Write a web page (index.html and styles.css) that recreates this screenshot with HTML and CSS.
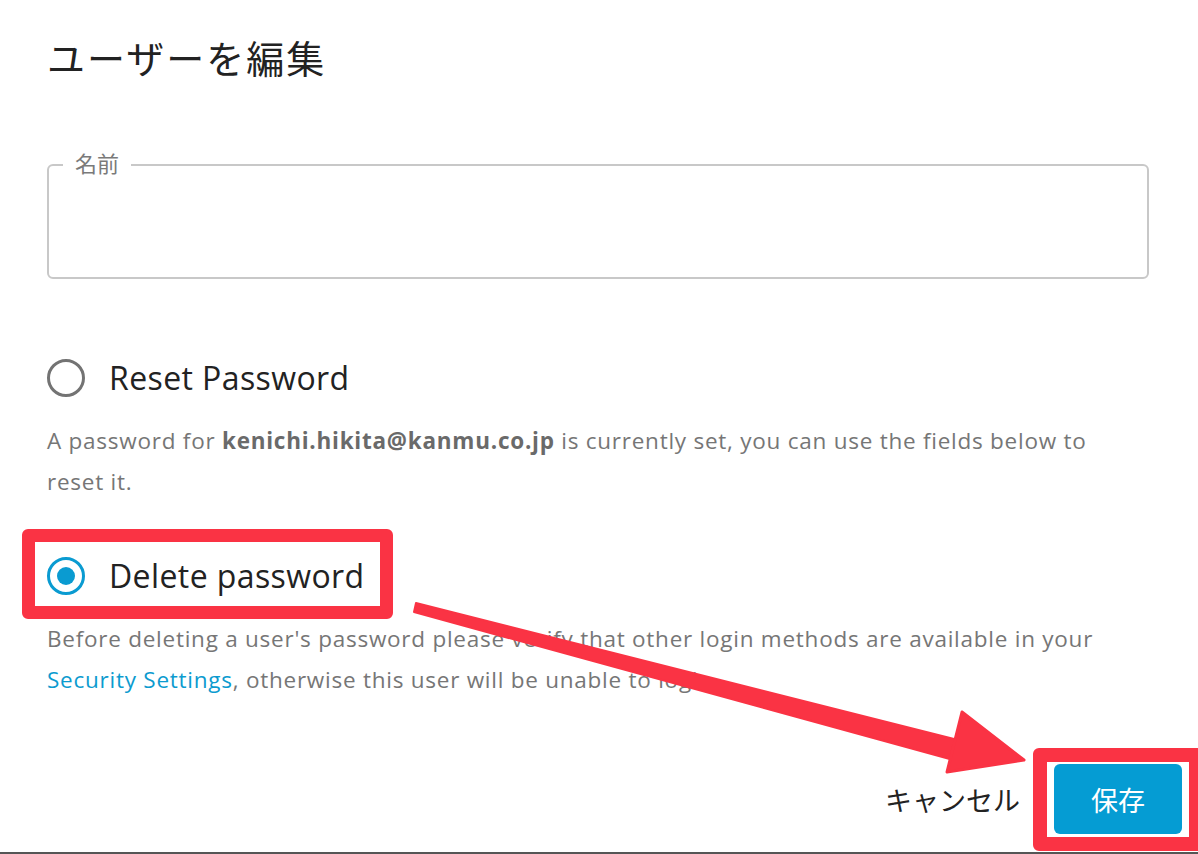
FILE: index.html
```html
<!DOCTYPE html>
<html lang="ja">
<head>
<meta charset="utf-8">
<title>ユーザーを編集</title>
<link rel="stylesheet" href="styles.css">
</head>
<body>
<div class="dialog">
  <h1 class="title">ユーザーを編集</h1>

  <fieldset class="field">
    <legend class="field-label">名前</legend>
    <div class="field-input"></div>
  </fieldset>

  <div class="option option-first">
    <span class="radio"></span>
    <span class="option-label">Reset Password</span>
  </div>
  <p class="desc">A password for <b>kenichi.hikita@kanmu.co.jp</b> is currently set, you can use the fields below to reset it.</p>

  <div class="option option-second">
    <span class="radio radio-on"></span>
    <span class="option-label">Delete password</span>
  </div>
  <p class="desc">Before deleting a user's password please verify that other login methods are available in your <a class="link" href="#">Security Settings</a>, otherwise this user will be unable to login.</p>

  <div class="actions">
    <button class="btn-cancel" type="button">キャンセル</button>
    <button class="btn-save" type="button">保存</button>
  </div>
</div>

<div class="mark mark-radio"></div>
<div class="mark mark-save"></div>
<svg class="arrow" width="1198" height="854" viewBox="0 0 1198 854">
  <path d="M416 603 L962 741 L957 761 L414 612 Z" fill="#fa3344" stroke="#fa3344" stroke-width="2" stroke-linejoin="round"/>
  <path d="M962 712 L1024 760 L947 772 Z" fill="#fa3344" stroke="#fa3344" stroke-width="3" stroke-linejoin="round"/>
</svg>
</body>
</html>
```

FILE: styles.css
```css
html, body {
  margin: 0;
  padding: 0;
  background: #ffffff;
}

body {
  font-family: "Open Sans", "Noto Sans CJK JP", sans-serif;
  color: #222222;
  width: 1198px;
  height: 854px;
  overflow: hidden;
  position: relative;
}

.dialog {
  box-sizing: border-box;
  height: 854px;
  padding: 29px 16px 0 47px;
  border-bottom: 2px solid #555555;
  display: flex;
  flex-direction: column;
}

.title {
  margin: 0;
  font-family: "Noto Sans CJK JP", sans-serif;
  font-weight: 400;
  font-size: 38px;
  line-height: 56px;
  letter-spacing: 2px;
  color: #222222;
}

.field {
  margin: 64px 33px 0 0;
  padding: 0 14px;
  border: 2px solid #c8c8c8;
  border-radius: 6px;
}

.field-label {
  padding: 0 12px 6px;
  font-family: "Noto Sans CJK JP", sans-serif;
  font-size: 22px;
  line-height: 26px;
  color: #7a7a7a;
}

.field-input {
  height: 96px;
}

.option {
  display: flex;
  align-items: center;
  gap: 24px;
  height: 38px;
}

.option-first {
  margin-top: 80px;
}

.option-second {
  margin-top: 55px;
}

.radio {
  box-sizing: border-box;
  width: 38px;
  height: 38px;
  border: 3px solid #737373;
  border-radius: 50%;
  display: flex;
  align-items: center;
  justify-content: center;
}

.radio-on {
  border-color: #0a9bd1;
}

.radio-on::after {
  content: "";
  width: 18px;
  height: 18px;
  border-radius: 50%;
  background: #0a9bd1;
}

.option-label {
  font-size: 32px;
  line-height: 38px;
  letter-spacing: 0.4px;
  color: #222222;
}

.desc {
  margin: 23px 57px 0 0;
  font-size: 22.5px;
  line-height: 41px;
  letter-spacing: 0.75px;
  color: #767676;
}

.desc b {
  font-weight: 700;
  color: #6a6a6a;
}

.link {
  color: #0c9bcf;
  text-decoration: none;
}

.actions {
  margin-top: auto;
  margin-bottom: 18px;
  display: flex;
  justify-content: flex-end;
  align-items: center;
  gap: 34px;
}

.btn-cancel {
  border: none;
  background: none;
  padding: 0;
  font-family: "Noto Sans CJK JP", sans-serif;
  font-size: 27px;
  color: #222222;
  cursor: pointer;
}

.btn-save {
  width: 128px;
  height: 70px;
  border: none;
  border-radius: 6px;
  background: #059cd3;
  color: #ffffff;
  font-family: "Noto Sans CJK JP", sans-serif;
  font-size: 27px;
  cursor: pointer;
}

.mark {
  position: absolute;
  box-sizing: border-box;
  border: 13px solid #fa3344;
  border-radius: 6px;
}

.mark-radio {
  left: 22px;
  top: 529px;
  width: 371px;
  height: 90px;
}

.mark-save {
  left: 1033px;
  top: 748px;
  width: 170px;
  height: 103px;
  border-width: 14px;
}

.arrow {
  position: absolute;
  left: 0;
  top: 0;
  pointer-events: none;
}
```
